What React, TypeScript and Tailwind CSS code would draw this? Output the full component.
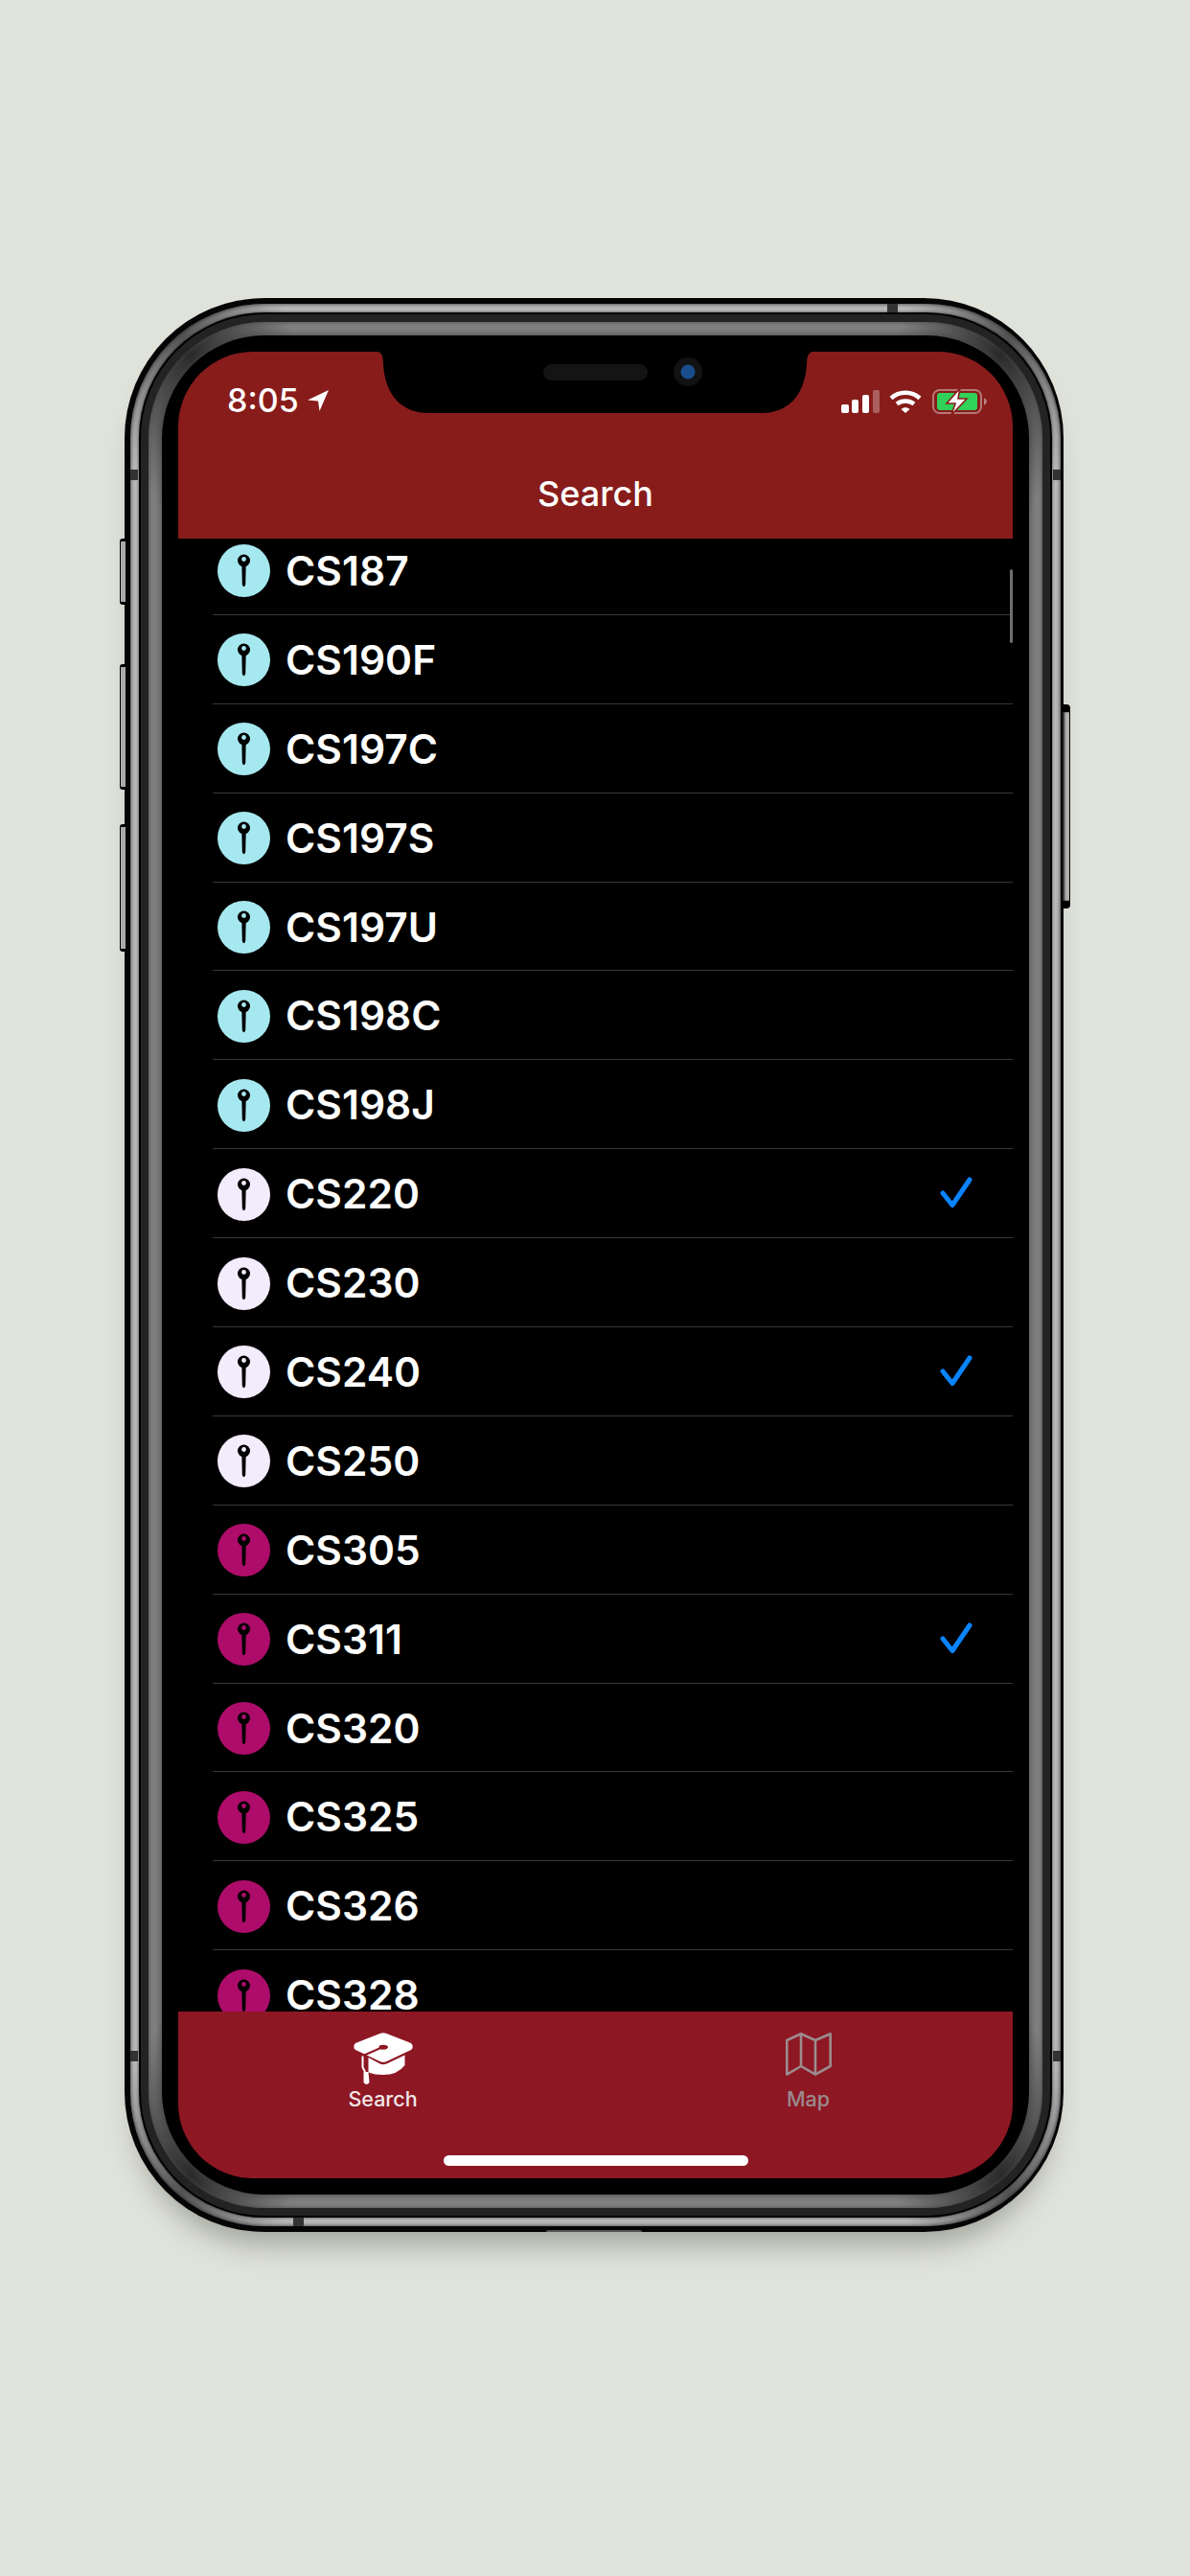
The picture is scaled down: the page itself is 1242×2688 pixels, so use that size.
import React from 'react';

const rows = [
  { name: 'CS187', tone: 'cyan' },
  { name: 'CS190F', tone: 'cyan' },
  { name: 'CS197C', tone: 'cyan' },
  { name: 'CS197S', tone: 'cyan' },
  { name: 'CS197U', tone: 'cyan' },
  { name: 'CS198C', tone: 'cyan' },
  { name: 'CS198J', tone: 'cyan' },
  { name: 'CS220', tone: 'lilac', checked: true },
  { name: 'CS230', tone: 'lilac' },
  { name: 'CS240', tone: 'lilac', checked: true },
  { name: 'CS250', tone: 'lilac' },
  { name: 'CS305', tone: 'pink' },
  { name: 'CS311', tone: 'pink', checked: true },
  { name: 'CS320', tone: 'pink' },
  { name: 'CS325', tone: 'pink' },
  { name: 'CS326', tone: 'pink' },
  { name: 'CS328', tone: 'pink' },
];

const tones: Record<string, string> = {
  cyan: '#a6e8f0',
  lilac: '#f3ecfd',
  pink: '#ad0c6a',
};

const Pin = ({ color }: { color: string }) => (
  <svg width="55" height="55" viewBox="0 0 55 55" className="shrink-0">
    <circle cx="27.5" cy="27.5" r="27.5" fill={color} />
    <circle cx="27.5" cy="17" r="6.5" fill="#000" />
    <circle cx="27.5" cy="15.5" r="2.4" fill={color} />
    <path d="M25.3 21 L29.7 21 L29.2 42 Q27.5 46.5 25.8 42 Z" fill="#000" />
  </svg>
);

const Check = () => (
  <svg width="36" height="36" viewBox="0 0 36 36" fill="none" className="shrink-0">
    <path d="M3 17 L13 29.5 L31 3" stroke="#0a84ff" strokeWidth="5" strokeLinecap="round" strokeLinejoin="round" />
  </svg>
);

const Notch = () => (
  <svg width="470" height="66" viewBox="0 0 470 66" className="absolute left-[200px] top-0">
    <path d="M7 0 Q14 0 14 13 C16 46 34 64 61 64 L409 64 C436 64 454 46 456 13 Q456 0 463 0 Z" fill="#000" />
    <rect x="181" y="13" width="109" height="17" rx="8.5" fill="#141414" />
    <circle cx="332" cy="21" r="15" fill="#101214" />
    <circle cx="332" cy="21" r="7.5" fill="#1a4d8c" />
  </svg>
);

const StatusIcons = () => (
  <div className="flex items-center">
    <svg width="40" height="24" viewBox="0 0 40 24" fill="#fff">
      <rect x="0" y="15" width="8" height="9" rx="2" />
      <rect x="11" y="10" width="7" height="14" rx="2" />
      <rect x="22" y="5" width="7" height="19" rx="2" />
      <rect x="33" y="0" width="7" height="24" rx="2" fillOpacity="0.3" />
    </svg>
    <svg width="34" height="24" viewBox="0 0 34 24" fill="none" stroke="#fff" strokeWidth="4.4" className="ml-[10px]">
      <path d="M2 8.5 C10.5 0.8 23.5 0.8 32 8.5" />
      <path d="M8 14.5 C13 10.5 21 10.5 26 14.5" />
      <path d="M12.5 20 L17 24 L21.5 20 C19 17.8 15 17.8 12.5 20 Z" fill="#fff" stroke="none" />
    </svg>
    <svg width="58" height="28" viewBox="0 0 58 28" className="ml-[11px]">
      <rect x="1" y="2" width="50" height="24" rx="6.5" fill="none" stroke="#fff" strokeOpacity="0.4" strokeWidth="2" />
      <rect x="5" y="5" width="42" height="18" rx="3" fill="#30d158" />
      <path d="M54 10 Q57 12 57 14 Q57 16 54 18 Z" fill="#fff" fillOpacity="0.45" />
      <path d="M29 0 L15 16 L24 16 L20 28 L36 11 L27 11 Z" fill="#fff" stroke="#871c1b" strokeWidth="1.6" />
    </svg>
  </div>
);

const CapGlyph = () => (
  <svg width="62" height="55" viewBox="0 0 62 55" fill="#fff">
    <path d="M28 0.8 Q31 -0.2 34 0.8 L60 11 Q63.5 14.8 60 18 L34 30.2 Q31 31.5 28 30.2 L2 18 Q-1.5 14.8 2 11 Z" />
    <path d="M35 14.5 Q35 16.5 31 16.5 L27.5 16.3 L9 24.5" fill="none" stroke="#8e1724" strokeWidth="2.2" />
    <ellipse cx="31" cy="15" rx="4.5" ry="2.3" fill="#8e1724" />
    <path d="M9.5 24.5 L9.5 36 L12 41" fill="none" stroke="#fff" strokeWidth="2" />
    <path d="M10.5 41 L15.5 41 L16.5 52 Q13.5 56 10.5 52 Z" />
    <path d="M15.5 26 L27.5 32.5 Q31 34 34.5 32.5 L53.5 23.5 L53.5 34 Q46 44 31 44 Q22 44 15.5 41.5 Z" />
  </svg>
);

const MapGlyph = () => (
  <svg width="48" height="45" viewBox="0 0 48 45" fill="none" stroke="#9b8b8d" strokeWidth="2.6" strokeLinejoin="round">
    <path d="M1.3 8 L16 1.3 L31 8 L46.7 1.3 L46.7 35 L31 43.7 L16 35 L1.3 43.7 Z" />
    <path d="M16 1.3 L16 35 M31 8 L31 43.7" />
  </svg>
);

export default function App() {
  return (
    <div className="min-h-[2688px] bg-[#e0e3da] pt-[311px] pl-[130px] font-['Inter','Liberation_Sans',sans-serif]">
      <div className="relative h-[2018px] w-[980px] rounded-[146px] bg-[#050505] py-[6px] pl-[6px] pr-[3px] shadow-[0_26px_30px_-14px_rgba(60,65,55,0.4)]">
        {/* side buttons */}
        <div className="absolute left-[-5px] top-[251px] h-[69px] w-[6px] rounded-l-[3px] border-y-[3px] border-l-[1px] border-black bg-[#aaaaaa]" />
        <div className="absolute left-[-5px] top-[382px] h-[131px] w-[6px] rounded-l-[3px] border-y-[3px] border-l-[1px] border-black bg-[#aaaaaa]" />
        <div className="absolute left-[-5px] top-[549px] h-[133px] w-[6px] rounded-l-[3px] border-y-[3px] border-l-[1px] border-black bg-[#aaaaaa]" />
        <div className="absolute right-[-7px] top-[424px] h-[213px] w-[8px] rounded-r-[4px] border-y-[8px] border-r-[1px] border-black bg-[#b0b0b0] shadow-[inset_2px_0_2px_#222]" />
        {/* antenna lines */}
        <div className="absolute left-[796px] top-[6px] h-[9px] w-[11px] bg-[#333]" />
        <div className="absolute left-[176px] bottom-[6px] h-[9px] w-[11px] bg-[#333]" />
        <div className="absolute left-[6px] top-[179px] h-[11px] w-[8px] bg-[#333]" />
        <div className="absolute right-[3px] top-[179px] h-[11px] w-[8px] bg-[#333]" />
        <div className="absolute left-[6px] top-[1829px] h-[11px] w-[8px] bg-[#333]" />
        <div className="absolute right-[3px] top-[1829px] h-[11px] w-[8px] bg-[#333]" />
        <div className="absolute bottom-0 left-[440px] h-[2px] w-[100px] rounded-t-[2px] bg-[#555]" />

        <div className="h-full rounded-[140px] bg-[conic-gradient(#b8b8b8_18deg,#555_24deg,#b8b8b8_30deg,#b8b8b8_150deg,#555_156deg,#b8b8b8_162deg,#b8b8b8_198deg,#555_204deg,#b8b8b8_210deg,#b8b8b8_330deg,#555_336deg,#b8b8b8_342deg)] p-[9px] shadow-[inset_0_0_4px_#222]">
          <div className="h-full rounded-[131px] bg-black p-[2px] shadow-[0_0_3px_#333]">
            <div className="h-full rounded-[129px] bg-[#232323] p-[8px]">
              <div className="h-full rounded-[121px] bg-[conic-gradient(#828282_18deg,#2a2a2a_24deg,#828282_30deg,#828282_150deg,#2a2a2a_156deg,#828282_162deg,#828282_198deg,#2a2a2a_204deg,#828282_210deg,#828282_330deg,#2a2a2a_336deg,#828282_342deg)] p-[14px] shadow-[inset_0_0_5px_#444]">
                <div className="h-full rounded-[107px] bg-black p-[17px] shadow-[0_0_9px_#444]">
                  <div className="relative flex h-full flex-col overflow-hidden rounded-[78px] bg-black">
                    {/* header */}
                    <div className="relative h-[195px] shrink-0 bg-[#871c1b] text-white">
                      <Notch />
                      <div className="flex h-[128px] items-end justify-between pb-[62px] pl-[51px] pr-[26px]">
                        <div className="flex items-center">
                          <span className="text-[34px] leading-[30px] font-medium">8:05</span>
                          <svg width="24" height="24" viewBox="0 0 24 24" className="ml-[8px]" fill="#fff">
                            <path d="M23 1 L1 11.5 L12 12.5 L13.5 23 Z" />
                          </svg>
                        </div>
                        <StatusIcons />
                      </div>
                      <div className="text-center text-[36px] leading-[40px] font-medium">Search</div>
                    </div>

                    {/* course list */}
                    <div className="relative min-h-0 flex-1 overflow-hidden">
                      <div className="mt-[-13px]">
                        {rows.map((row) => (
                          <div key={row.name} className="ml-[36px] flex h-[92.9px] items-center border-b border-[#38383a] pt-[2px] pl-[5px] pr-[40px]">
                            <Pin color={tones[row.tone]} />
                            <span className="ml-[16px] flex-1 text-[42.5px] leading-[50px] font-semibold text-white">{row.name}</span>
                            {row.checked && <Check />}
                          </div>
                        ))}
                      </div>
                      <div className="absolute right-0 top-[32px] h-[77px] w-[3px] rounded-full bg-[#6e6e6e]" />
                    </div>

                    {/* tab bar */}
                    <div className="flex h-[174px] shrink-0 flex-col items-center bg-[#8e1724]">
                      <div className="flex pt-[22px]">
                        <div className="flex w-[444px] flex-col items-center text-white">
                          <CapGlyph />
                          <span className="text-[21.5px] leading-[28px] font-medium text-[#f1e6e7]">Search</span>
                        </div>
                        <div className="flex w-[444px] flex-col items-center">
                          <div className="h-[55px]">
                            <MapGlyph />
                          </div>
                          <span className="text-[21.5px] leading-[28px] font-medium text-[#9b8b8d]">Map</span>
                        </div>
                      </div>
                      <div className="mt-auto mb-[13px] h-[11px] w-[318px] rounded-full bg-white" />
                    </div>
                  </div>
                </div>
              </div>
            </div>
          </div>
        </div>
      </div>
    </div>
  );
}
